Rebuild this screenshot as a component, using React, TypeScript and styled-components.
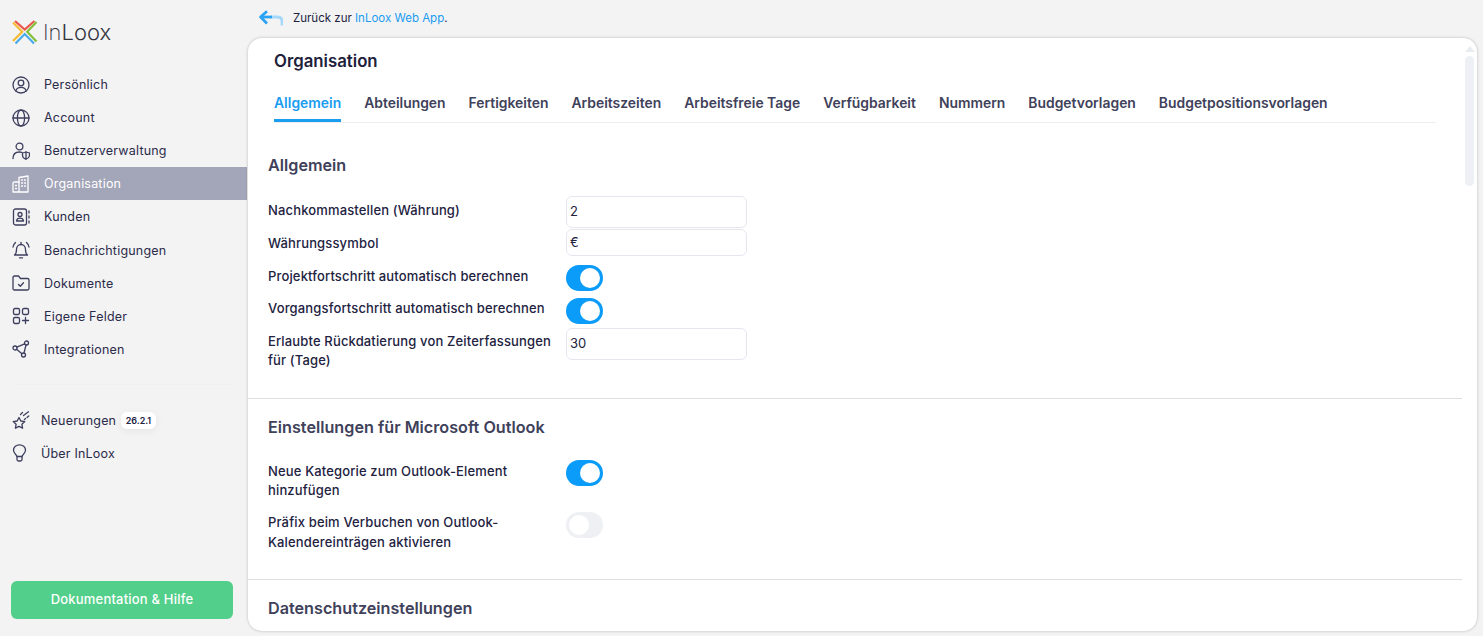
import React from 'react'
import styled, { createGlobalStyle } from 'styled-components'

const GlobalStyle = createGlobalStyle`
    html, body {
        margin: 0;
        height: 100%;
        overflow: hidden;
        background: #f3f3f4;
    }
    * {
        box-sizing: border-box;
    }
    body {
        font-family: "Inter", "Noto Sans", sans-serif;
        color: #22223f;
    }
`

const Page = styled.div`
    display: flex;
    width: 1483px;
    height: 636px;
    overflow: hidden;
`

const Sidebar = styled.aside`
    flex: 0 0 247px;
    display: flex;
    flex-direction: column;
    height: 636px;
`

const LogoRow = styled.div`
    display: flex;
    align-items: center;
    gap: 5px;
    height: 68px;
    padding: 0 0 5px 12px;
`

const LogoText = styled.span`
    font-family: "Inter", sans-serif;
    font-weight: 300;
    font-size: 22px;
    color: #34343c;
`

const LogoThin = styled.span`
    font-weight: 200;
`

const NavList = styled.nav`
    display: flex;
    flex-direction: column;
`

const NavItem = styled.div<{ $active?: boolean; $gap?: number }>`
    display: flex;
    align-items: center;
    gap: ${({ $gap }) => $gap ?? 14}px;
    height: 33.1px;
    padding-left: 12px;
    font-size: 12.5px;
    letter-spacing: 0.2px;
    color: ${({ $active }) => ($active ? '#ffffff' : '#2b2b4a')};
    background: ${({ $active }) => ($active ? '#a3a5b8' : 'transparent')};

    svg {
        flex: 0 0 18px;
        width: 18px;
        height: 18px;
        fill: none;
        stroke: ${({ $active }) => ($active ? '#ffffff' : '#3e3f5e')};
        stroke-width: 1.3;
        stroke-linecap: round;
        stroke-linejoin: round;
    }
`

const SideDivider = styled.div`
    height: 1px;
    margin: 18px 15px 19px 14px;
    background: #efefef;
`

const VersionBadge = styled.span`
    margin-left: -6px;
    padding: 3px 4.5px;
    border-radius: 6px;
    background: #ffffff;
    font-size: 9px;
    line-height: 11px;
    font-weight: 600;
    letter-spacing: 0;
    box-shadow: 0 2px 8px rgba(0, 0, 0, 0.06);
    color: #22223f;
`

const HelpButton = styled.div`
    display: flex;
    align-items: center;
    justify-content: center;
    height: 38px;
    margin: auto 14px 17px 11px;
    padding-bottom: 3px;
    border-radius: 6px;
    background: #52cf8a;
    color: #ffffff;
    font-size: 13px;
    font-weight: 500;
    letter-spacing: 0.2px;
`

const Main = styled.main`
    flex: 1;
    display: flex;
    flex-direction: column;
    min-width: 0;
`

const BackBar = styled.div`
    display: flex;
    align-items: center;
    gap: 10px;
    height: 38px;
    padding: 0 0 2px 12px;
    font-size: 11.5px;
    color: #22223f;

    a {
        color: #1a9cf0;
        text-decoration: none;
    }
`

const Card = styled.section`
    position: relative;
    width: 1229px;
    margin-left: 1px;
    height: 593px;
    background: #ffffff;
    border-radius: 14px;
    overflow: hidden;
    box-shadow: 0 0 3px rgba(0, 0, 0, 0.25);
`

const CardHead = styled.header`
    padding: 14px 0 0 26px;
    margin-right: 41px;
`

const PageTitle = styled.h1`
    margin: 0 0 21px;
    font-size: 16.8px;
    line-height: 19px;
    font-weight: 600;
    color: #20203a;
`

const Tabs = styled.div`
    display: flex;
    gap: 23px;
    border-bottom: 1px solid #eeeeee;
`

const Tab = styled.div<{ $active?: boolean }>`
    height: 30px;
    padding-top: 2px;
    font-size: 13.9px;
    line-height: 18px;
    font-weight: 600;
    white-space: nowrap;
    color: ${({ $active }) => ($active ? '#1a9cf0' : '#40415a')};
    border-bottom: ${({ $active }) => ($active ? '3px solid #1a9cf0' : 'none')};
`

const Section = styled.div<{ $height: number; $top: number; $last?: boolean }>`
    width: 1214px;
    height: ${({ $height }) => $height}px;
    padding: ${({ $top }) => $top}px 0 0 20px;
    border-bottom: ${({ $last }) => ($last ? 'none' : '1px solid #dfdfe3')};
`

const SectionTitle = styled.h2<{ $mb: number }>`
    margin: 0 0 ${({ $mb }) => $mb}px;
    font-size: 16.2px;
    line-height: 20px;
    font-weight: 600;
    color: #40415a;
`

const FormRow = styled.div<{ $height: number; $mb?: number; $alignTop?: boolean }>`
    display: flex;
    align-items: center;
    height: ${({ $height }) => $height}px;
    margin-bottom: ${({ $mb }) => $mb ?? 0}px;

    & > :last-child {
        align-self: ${({ $alignTop }) => ($alignTop ? 'flex-start' : 'center')};
    }
`

// $dy nudges the text off the row's centre line, the labels don't sit exactly on it
const Label = styled.div<{ $dy?: number }>`
    flex: 0 0 298px;
    padding-right: 6px;
    margin-top: ${({ $dy }) => ($dy && $dy > 0 ? $dy * 2 : 0)}px;
    margin-bottom: ${({ $dy }) => ($dy && $dy < 0 ? -$dy * 2 : 0)}px;
    font-size: 13px;
    line-height: 19.5px;
    font-weight: 500;
    letter-spacing: 0.15px;
    color: #22223f;
`

const Field = styled.div<{ $height: number }>`
    display: flex;
    align-items: center;
    width: 181px;
    height: ${({ $height }) => $height}px;
    padding: 0 0 2px 3px;
    border: 1px solid #e6e6ef;
    border-radius: 6px;
    font-size: 13px;
    color: #22223f;
`

const ToggleTrack = styled.div<{ $on: boolean }>`
    display: flex;
    align-items: center;
    justify-content: ${({ $on }) => ($on ? 'flex-end' : 'flex-start')};
    width: 37px;
    height: 26px;
    padding: 0 3px;
    border-radius: 13px;
    background: ${({ $on }) => ($on ? '#0b9bf8' : '#eef0f3')};
`

const ToggleKnob = styled.div`
    width: 20px;
    height: 20px;
    border-radius: 50%;
    background: #ffffff;
`

const ScrollTrack = styled.div`
    position: absolute;
    top: 18px;
    right: 3px;
    width: 9px;
    height: 130px;
    border-radius: 5px;
    background: #edf0f4;
`

const ScrollArrow = styled.div`
    position: absolute;
    top: 8px;
    right: 2px;
    width: 0;
    height: 0;
    border-left: 5.5px solid transparent;
    border-right: 5.5px solid transparent;
    border-bottom: 6px solid #e8ebf0;
`

const Logo = () => (
    <svg width="26" height="26" viewBox="0 0 26 26" fill="none" strokeWidth="2.2" strokeLinecap="butt">
        <path d="M3 2 L12.7 10.6 L22.4 2" stroke="#e8574a" />
        <path d="M24.5 3 L15.2 12.8 L24.5 22.5" stroke="#84bf3a" />
        <path d="M3.5 24.5 L12.7 15 L22 24.5" stroke="#4aa9e8" />
        <path d="M1 3.5 L10.2 12.8 L1 22" stroke="#f6bb33" />
    </svg>
)

const BackArrow = () => (
    <svg width="24" height="16" viewBox="0 0 24 16" fill="none" strokeWidth="2.8" strokeLinejoin="round">
        <path d="M12 7 H18 Q23 7 23 11 V15.5" stroke="#a5d8f9" />
        <path d="M8 1.2 L1.6 7 L8 13.4" stroke="#2ba3f2" />
        <path d="M2 7 H13" stroke="#2ba3f2" />
    </svg>
)

const icons: Record<string, React.ReactNode> = {
    user: (
        <svg viewBox="0 0 18 18">
            <circle cx="9" cy="9" r="8" />
            <circle cx="9" cy="7" r="2.8" />
            <path d="M3.8 15 C4.6 12.2 6.6 11.4 9 11.4 C11.4 11.4 13.4 12.2 14.2 15" />
        </svg>
    ),
    globe: (
        <svg viewBox="0 0 18 18">
            <circle cx="9" cy="9" r="8" />
            <ellipse cx="9" cy="9" rx="3.6" ry="8" />
            <path d="M1 9 H17" />
        </svg>
    ),
    admin: (
        <svg viewBox="0 0 18 18">
            <circle cx="7.5" cy="4.5" r="3.4" />
            <path d="M1 16.5 C1 12.5 3.5 10 7.5 10 C8.5 10 9.2 10.1 10 10.5" />
            <path d="M10.5 11 L14 10 L17.5 11 V13 C17.5 15.2 16 16.6 14 17 C12 16.6 10.5 15.2 10.5 13 Z" />
            <path d="M14 10 V17" />
        </svg>
    ),
    org: (
        <svg viewBox="0 0 18 18">
            <path d="M7 2.5 L16 1 V17 H7 Z" />
            <path d="M7 7 H2.5 Q1 7 1 8.5 V17 H7" />
            <path d="M9.5 5 H10.5 M12.5 5 H13.5 M9.5 8 H10.5 M12.5 8 H13.5 M9.5 11 H10.5 M12.5 11 H13.5 M3.5 10.5 H4.5 M3.5 13.5 H4.5" />
        </svg>
    ),
    contacts: (
        <svg viewBox="0 0 18 18">
            <rect x="1.5" y="1" width="13" height="16" rx="2" />
            <circle cx="8" cy="6.5" r="2" />
            <path d="M4.5 13 C4.8 10.8 6.2 10.2 8 10.2 C9.8 10.2 11.2 10.8 11.5 13 Z" />
            <path d="M17 3 V5 M17 8 V10 M17 13 V15" />
        </svg>
    ),
    bell: (
        <svg viewBox="0 0 18 18">
            <path d="M2.5 14 C4.5 12.5 4.5 10.5 4.5 8.5 C4.5 5.5 6.5 3.5 9 3.5 C11.5 3.5 13.5 5.5 13.5 8.5 C13.5 10.5 13.5 12.5 15.5 14 Z" />
            <path d="M7.5 16.8 H10.5" />
            <path d="M9 1.5 V3.5" />
            <path d="M3.5 1.5 C2 2.8 1.2 4.2 1 6 M14.5 1.5 C16 2.8 16.8 4.2 17 6" />
        </svg>
    ),
    folder: (
        <svg viewBox="0 0 18 18">
            <path d="M1 3.5 Q1 2 2.5 2 H6.5 L8.5 4.5 H15.5 Q17 4.5 17 6 V14.5 Q17 16 15.5 16 H2.5 Q1 16 1 14.5 Z" />
            <path d="M6.5 10.5 L8.3 12.3 L11.5 8.8" />
        </svg>
    ),
    fields: (
        <svg viewBox="0 0 18 18">
            <rect x="1.5" y="1.5" width="6" height="6" rx="1.4" />
            <rect x="10.5" y="1.5" width="6" height="6" rx="1.4" />
            <rect x="1.5" y="10.5" width="6" height="6" rx="1.4" />
            <path d="M13.5 10.5 V16.5 M10.5 13.5 H16.5" />
        </svg>
    ),
    nodes: (
        <svg viewBox="0 0 18 18">
            <circle cx="3" cy="8" r="2" />
            <circle cx="14.5" cy="3" r="2" />
            <circle cx="11.5" cy="15" r="2" />
            <path d="M4.8 7.2 L12.7 3.8 M4.6 9.2 L9.9 13.8 M14 5 L12 13" />
        </svg>
    ),
    star: (
        <svg viewBox="0 0 18 18">
            <path d="M7 6.5 L8.8 10 L12.8 10.6 L9.9 13.3 L10.6 17.2 L7 15.4 L3.4 17.2 L4.1 13.3 L1.2 10.6 L5.2 10 Z" />
            <path d="M8.5 3.5 L10.5 1.5 M11.5 4.5 L16.5 0.8 M12.5 8.5 L13.5 7.6 M15 6.5 L16.8 5" />
        </svg>
    ),
    bulb: (
        <svg viewBox="0 0 18 18">
            <path d="M5 12.5 C5 10.8 1.5 9.6 1.5 6.3 C1.5 3 4.3 0.8 7.5 0.8 C10.7 0.8 13.5 3 13.5 6.3 C13.5 9.6 10 10.8 10 12.5 Z" />
            <path d="M5 12.5 V15.5 Q5 17 6.5 17 H8.5 Q10 17 10 15.5 V12.5" />
        </svg>
    ),
}

const navItems = [
    { icon: 'user', label: 'Persönlich' },
    { icon: 'globe', label: 'Account' },
    { icon: 'admin', label: 'Benutzerverwaltung' },
    { icon: 'org', label: 'Organisation', active: true },
    { icon: 'contacts', label: 'Kunden' },
    { icon: 'bell', label: 'Benachrichtigungen' },
    { icon: 'folder', label: 'Dokumente' },
    { icon: 'fields', label: 'Eigene Felder' },
    { icon: 'nodes', label: 'Integrationen' },
]

const tabs = [
    'Allgemein',
    'Abteilungen',
    'Fertigkeiten',
    'Arbeitszeiten',
    'Arbeitsfreie Tage',
    'Verfügbarkeit',
    'Nummern',
    'Budgetvorlagen',
    'Budgetpositionsvorlagen',
]

const App = () => {
    return (
        <Page>
            <GlobalStyle />
            <Sidebar>
                <LogoRow>
                    <Logo />
                    <LogoText><LogoThin>In</LogoThin>Loox</LogoText>
                </LogoRow>
                <NavList>
                    {navItems.map(item => (
                        <NavItem key={item.label} $active={item.active}>
                            {icons[item.icon]}
                            {item.label}
                        </NavItem>
                    ))}
                </NavList>
                <SideDivider />
                <NavList>
                    <NavItem $gap={11}>
                        {icons.star}
                        Neuerungen
                        <VersionBadge>26.2.1</VersionBadge>
                    </NavItem>
                    <NavItem $gap={11}>
                        {icons.bulb}
                        Über InLoox
                    </NavItem>
                </NavList>
                <HelpButton>Dokumentation &amp; Hilfe</HelpButton>
            </Sidebar>
            <Main>
                <BackBar>
                    <BackArrow />
                    <span>Zurück zur <a href="#app">InLoox Web App</a>.</span>
                </BackBar>
                <Card>
                    <ScrollArrow />
                    <ScrollTrack />
                    <CardHead>
                        <PageTitle>Organisation</PageTitle>
                        <Tabs>
                            {tabs.map((tab, i) => (
                                <Tab key={tab} $active={i === 0}>{tab}</Tab>
                            ))}
                        </Tabs>
                    </CardHead>
                    <Section $height={276} $top={32}>
                        <SectionTitle $mb={21}>Allgemein</SectionTitle>
                        <FormRow $height={32} $mb={1}>
                            <Label $dy={-1}>Nachkommastellen (Währung)</Label>
                            <Field $height={32}>2</Field>
                        </FormRow>
                        <FormRow $height={27} $mb={9}>
                            <Label $dy={1}>Währungssymbol</Label>
                            <Field $height={27}>€</Field>
                        </FormRow>
                        <FormRow $height={26} $mb={7}>
                            <Label $dy={-1}>Projektfortschritt automatisch berechnen</Label>
                            <ToggleTrack $on><ToggleKnob /></ToggleTrack>
                        </FormRow>
                        <FormRow $height={26} $mb={4}>
                            <Label $dy={-2}>Vorgangsfortschritt automatisch berechnen</Label>
                            <ToggleTrack $on><ToggleKnob /></ToggleTrack>
                        </FormRow>
                        <FormRow $height={32}>
                            <Label $dy={7}>Erlaubte Rückdatierung von Zeiterfassungen für (Tage)</Label>
                            <Field $height={32}>30</Field>
                        </FormRow>
                    </Section>
                    <Section $height={181} $top={18}>
                        <SectionTitle $mb={23}>Einstellungen für Microsoft Outlook</SectionTitle>
                        <FormRow $height={42} $mb={10} $alignTop>
                            <Label>Neue Kategorie zum Outlook-Element hinzufügen</Label>
                            <ToggleTrack $on><ToggleKnob /></ToggleTrack>
                        </FormRow>
                        <FormRow $height={41} $alignTop>
                            <Label>Präfix beim Verbuchen von Outlook-Kalendereinträgen aktivieren</Label>
                            <ToggleTrack $on={false}><ToggleKnob /></ToggleTrack>
                        </FormRow>
                    </Section>
                    <Section $height={60} $top={18} $last>
                        <SectionTitle $mb={0}>Datenschutzeinstellungen</SectionTitle>
                    </Section>
                </Card>
            </Main>
        </Page>
    )
}

export default App
